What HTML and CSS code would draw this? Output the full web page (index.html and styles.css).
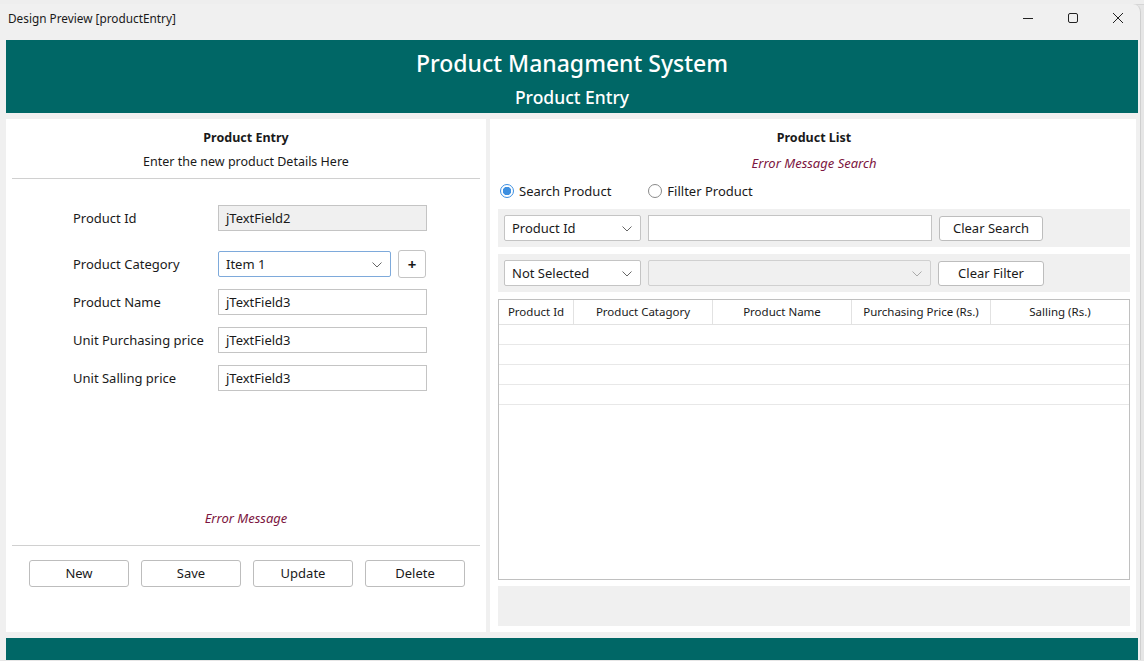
FILE: index.html
```html
<!DOCTYPE html>
<html>
<head>
<meta charset="utf-8">
<link rel="stylesheet" href="styles.css">
</head>
<body>
<div class="ide-strip"></div>
<div class="window">
  <div class="titlebar">
    <span class="title">Design Preview [productEntry]</span>
    <div class="controls">
      <svg class="ctl" width="12" height="12" viewBox="0 0 12 12"><path d="M1 6.5h10" stroke="#222" stroke-width="1"/></svg>
      <svg class="ctl" width="12" height="12" viewBox="0 0 12 12"><rect x="1.5" y="1.5" width="9" height="9" rx="1.5" fill="none" stroke="#222" stroke-width="1"/></svg>
      <svg class="ctl" width="12" height="12" viewBox="0 0 12 12"><path d="M1 1L11 11M11 1L1 11" stroke="#222" stroke-width="1"/></svg>
    </div>
  </div>
  <div class="client">
    <div class="header">
      <div class="h-title">Product Managment System</div>
      <div class="h-sub">Product Entry</div>
    </div>
    <div class="panels">
      <div class="panel left">
        <div class="p-title">Product Entry</div>
        <div class="p-sub">Enter the new product Details Here</div>
        <div class="hr"></div>
        <div class="form">
          <div class="row r-id"><span class="lbl">Product Id</span><div class="field disabled">jTextField2</div></div>
          <div class="row r-cat"><span class="lbl">Product Category</span>
            <div class="combo focus">Item 1<svg class="chev" width="10" height="6" viewBox="0 0 10 6"><path d="M0.5 0.5L5 5L9.5 0.5" fill="none" stroke="#666" stroke-width="1"/></svg></div>
            <div class="plus">+</div>
          </div>
          <div class="row"><span class="lbl">Product Name</span><div class="field">jTextField3</div></div>
          <div class="row"><span class="lbl">Unit Purchasing price</span><div class="field">jTextField3</div></div>
          <div class="row"><span class="lbl">Unit Salling price</span><div class="field">jTextField3</div></div>
        </div>
        <div class="err err-left">Error Message</div>
        <div class="hr hr-bottom"></div>
        <div class="buttons">
          <div class="btn">New</div>
          <div class="btn">Save</div>
          <div class="btn">Update</div>
          <div class="btn">Delete</div>
        </div>
      </div>
      <div class="panel right">
        <div class="p-title">Product List</div>
        <div class="err err-right">Error Message Search</div>
        <div class="radios">
          <div class="radio-item"><span class="radio on"></span>Search Product</div>
          <div class="radio-item"><span class="radio"></span>Fillter Product</div>
        </div>
        <div class="bar">
          <div class="combo c-small">Product Id<svg class="chev" width="10" height="6" viewBox="0 0 10 6"><path d="M0.5 0.5L5 5L9.5 0.5" fill="none" stroke="#666" stroke-width="1"/></svg></div>
          <div class="field f-search"></div>
          <div class="btn b-bar">Clear Search</div>
        </div>
        <div class="bar bar2">
          <div class="combo c-small">Not Selected<svg class="chev" width="10" height="6" viewBox="0 0 10 6"><path d="M0.5 0.5L5 5L9.5 0.5" fill="none" stroke="#666" stroke-width="1"/></svg></div>
          <div class="combo c-disabled"><svg class="chev" width="10" height="6" viewBox="0 0 10 6"><path d="M0.5 0.5L5 5L9.5 0.5" fill="none" stroke="#aaa" stroke-width="1"/></svg></div>
          <div class="btn b-bar b-filter">Clear Filter</div>
        </div>
        <div class="table">
          <div class="thead">
            <div class="th c1">Product Id</div>
            <div class="th c2">Product Catagory</div>
            <div class="th c3">Product Name</div>
            <div class="th c4">Purchasing Price (Rs.)</div>
            <div class="th c5">Salling (Rs.)</div>
          </div>
          <div class="trow"></div>
          <div class="trow"></div>
          <div class="trow"></div>
          <div class="trow"></div>
        </div>
        <div class="status"></div>
      </div>
    </div>
    <div class="footer"></div>
  </div>
</div>
</body>
</html>
```
FILE: styles.css
```css
* { box-sizing: border-box; }
html, body { margin: 0; padding: 0; }
body {
  width: 1144px;
  height: 661px;
  overflow: hidden;
  background: #e6e6e6;
  font-family: "Noto Sans", "Open Sans", sans-serif;
  font-size: 12.5px;
  color: #1a1a1a;
}
.ide-strip {
  height: 5px;
  background: #eeeeee;
  border-bottom: 1px solid #d6d6d6;
}
.window {
  width: 1141px;
  height: 656px;
  background: #f0f0f0;
  border-top-right-radius: 8px;
  border-right: 1px solid #cfcfcf;
  overflow: hidden;
  margin-top: -1px;
}
.titlebar {
  height: 36px;
  display: flex;
  align-items: flex-start;
  justify-content: space-between;
  padding-left: 8px;
  padding-top: 6px;
}
.title { font-size: 11.8px; line-height: 16px; color: #1a1a1a; }
.controls { display: flex; gap: 33px; padding-right: 16px; padding-top: 2px; }
.ctl { display: block; }
.client { padding: 0 2px 0 6px; }
.header {
  background: #006766;
  height: 73px;
  color: #fff;
  text-align: center;
  padding-top: 8px;
}
.h-title { font-size: 23px; font-weight: 500; line-height: 30px; }
.h-sub { font-size: 17.5px; font-weight: 500; line-height: 24px; margin-top: 7px; }
.panels {
  display: flex;
  gap: 4px;
  margin-top: 6px;
  height: 513px;
}
.panel { background: #fff; height: 100%; }
.left { width: 480px; padding: 0 6px; display: flex; flex-direction: column; }
.right { width: 646px; padding: 0 6px 0 8px; display: flex; flex-direction: column; }
.p-title { text-align: center; font-weight: 700; font-size: 12.5px; margin-top: 10px; line-height: 18px; }
.p-sub { text-align: center; margin-top: 6px; line-height: 18px; }
.hr { height: 1px; background: #d0d0d0; margin-top: 7px; }
.form { padding-left: 61px; margin-top: 26px; display: flex; flex-direction: column; gap: 12px; font-size: 13px; }
.row { display: flex; align-items: center; height: 26px; }
.r-cat { margin-top: 8px; }
.lbl { width: 145px; }
.field {
  width: 209px;
  height: 26px;
  border: 1px solid #c4c4c4;
  background: #fff;
  padding-left: 7px;
  line-height: 24px;
}
.field.disabled { background: #f0f0f0; }
.combo {
  position: relative;
  width: 173px;
  height: 26px;
  border: 1px solid #c4c4c4;
  border-radius: 2px;
  background: #fff;
  padding-left: 7px;
  line-height: 24px;
}
.combo.focus { border-color: #7eaadb; }
.chev { position: absolute; right: 8px; top: 10px; }
.plus {
  margin-left: 7px;
  width: 28px;
  height: 28px;
  border: 1px solid #c4c4c4;
  border-radius: 3px;
  text-align: center;
  font-weight: 700;
  font-size: 15px;
  line-height: 26px;
}
.err { color: #7c1540; font-style: italic; text-align: center; font-size: 13px; }
.err-left { margin-top: auto; line-height: 18px; }
.hr-bottom { margin-top: 18px; }
.buttons { display: flex; gap: 12px; padding-left: 17px; margin-top: 14px; margin-bottom: 45px; }
.btn {
  width: 100px;
  height: 27px;
  border: 1px solid #bdbdbd;
  border-radius: 3px;
  background: #fff;
  text-align: center;
  line-height: 25px;
  font-size: 13px;
}
.err-right { margin-top: 7px; line-height: 18px; }
.radios { display: flex; gap: 37px; margin-top: 10px; padding-left: 2px; height: 18px; align-items: center; font-size: 13px; }
.radio-item { display: flex; align-items: center; gap: 5px; }
.radio {
  width: 14px;
  height: 14px;
  border-radius: 50%;
  border: 1px solid #8a8a8a;
  background: #fff;
}
.radio.on {
  border: 1px solid #3d8fe0;
  background: radial-gradient(circle, #3d8fe0 0 4px, #fff 4.5px);
}
.bar {
  background: #f0f0f0;
  height: 38px;
  margin-top: 9px;
  display: flex;
  align-items: center;
  padding-left: 6px;
  gap: 7px;
  font-size: 13px;
}
.bar2 { margin-top: 7px; }
.c-small { width: 137px; }
.f-search { width: 284px; }
.c-disabled { width: 283px; background: #f0f0f0; border-color: #d0d0d0; }
.b-bar { width: 104px; height: 25px; line-height: 23px; }
.b-filter { width: 106px; }
.table {
  margin-top: 7px;
  height: 281px;
  border: 1px solid #c0c0c0;
  background: #fff;
}
.thead { display: flex; height: 25px; border-bottom: 1px solid #e2e2e2; }
.th { text-align: center; line-height: 24px; font-size: 11.5px; border-right: 1px solid #e2e2e2; }
.c1 { width: 75px; }
.c2 { width: 139px; }
.c3 { width: 139px; }
.c4 { width: 139px; }
.c5 { flex: 1; border-right: none; }
.trow { height: 20px; border-bottom: 1px solid #e8e8e8; }
.status { background: #f0f0f0; height: 40px; margin-top: 6px; }
.footer { background: #006766; height: 23px; margin-top: 6px; }
```
